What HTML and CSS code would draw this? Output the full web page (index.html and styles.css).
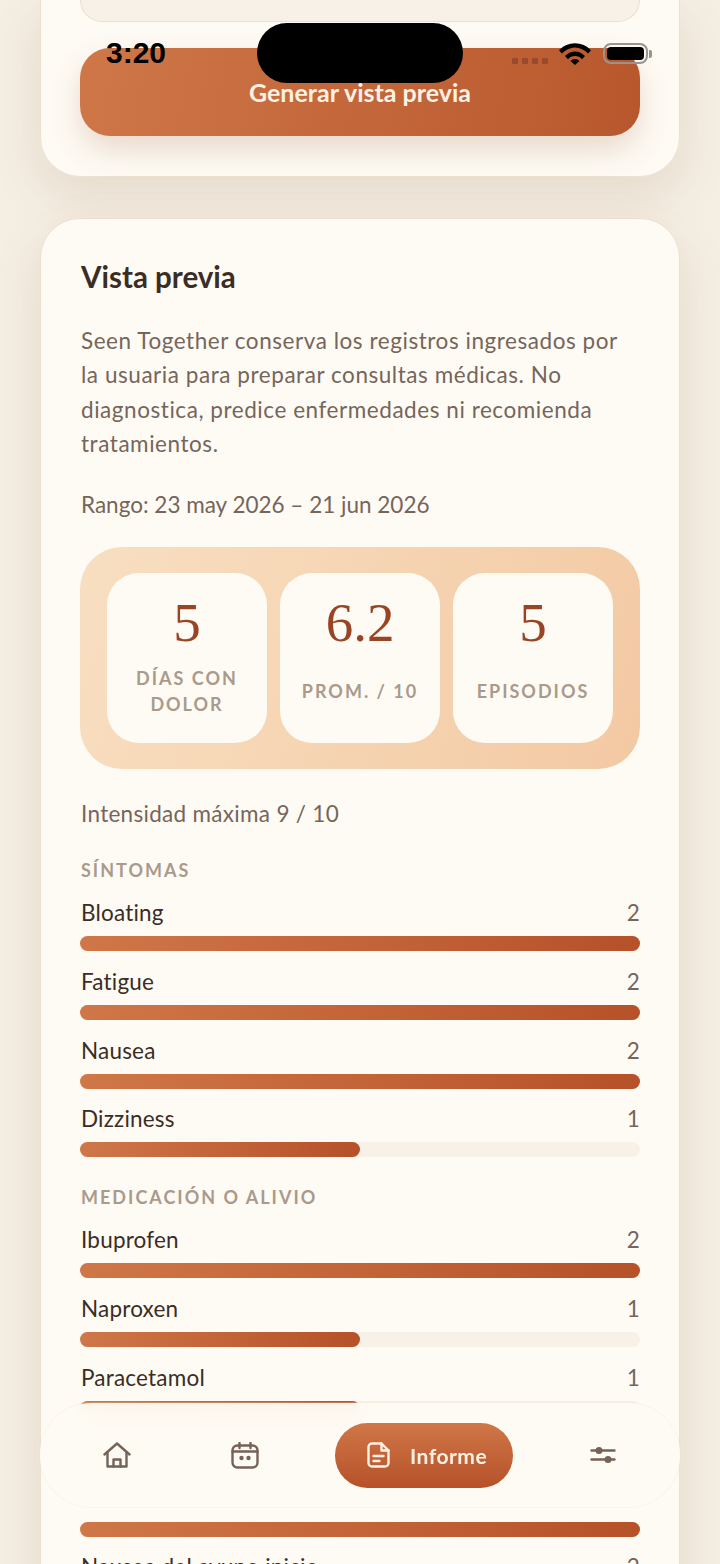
FILE: index.html
```html
<!DOCTYPE html>
<html lang="es">
<head>
  <meta charset="UTF-8">
  <title>Seen Together - Informe</title>
  <meta name="viewport" content="width=device-width, initial-scale=1">
  <link rel="stylesheet" href="styles.css">
</head>
<body>
  <div class="status-bar">
    <span class="time">3:20</span>
    <div class="island"></div>
    <div class="status-icons">
      <div class="signal"><i></i><i></i><i></i><i></i></div>
      <svg class="wifi" width="32" height="23" viewBox="0 0 32 23">
        <path d="M0 8.200a22 22 0 0 1 32 0l-3 3.200a17.600 17.600 0 0 0-26 0z"/>
        <path d="M6 14a13.500 13.500 0 0 1 20 0l-3 3.200a9.300 9.300 0 0 0-14 0z"/>
        <path d="M11.500 19a6 6 0 0 1 9 0L16 23z"/>
      </svg>
      <div class="battery"><div class="battery-fill"></div></div>
      <div class="battery-cap"></div>
    </div>
  </div>

  <main>
    <section class="card card-top">
      <div class="range-box"></div>
      <button class="primary-btn">Generar vista previa</button>
    </section>

    <section class="card card-preview">
      <h2>Vista previa</h2>
      <p class="disclaimer">Seen Together conserva los registros ingresados por la usuaria para preparar consultas médicas. No diagnostica, predice enfermedades ni recomienda tratamientos.</p>
      <p class="range">Rango: 23 may 2026 – 21 jun 2026</p>

      <div class="stats">
        <div class="stat"><div class="stat-num">5</div><div class="stat-label">Días con dolor</div></div>
        <div class="stat"><div class="stat-num">6.2</div><div class="stat-label">Prom. / 10</div></div>
        <div class="stat"><div class="stat-num">5</div><div class="stat-label">Episodios</div></div>
      </div>

      <p class="max">Intensidad máxima 9 / 10</p>

      <h3>Síntomas</h3>
      <div class="bar-list">
        <div class="bar-row"><div class="bar-head"><span>Bloating</span><b>2</b></div><div class="track"><div class="fill" style="width:100%"></div></div></div>
        <div class="bar-row"><div class="bar-head"><span>Fatigue</span><b>2</b></div><div class="track"><div class="fill" style="width:100%"></div></div></div>
        <div class="bar-row"><div class="bar-head"><span>Nausea</span><b>2</b></div><div class="track"><div class="fill" style="width:100%"></div></div></div>
        <div class="bar-row"><div class="bar-head"><span>Dizziness</span><b>1</b></div><div class="track"><div class="fill" style="width:50%"></div></div></div>
      </div>

      <h3>Medicación o alivio</h3>
      <div class="bar-list">
        <div class="bar-row"><div class="bar-head"><span>Ibuprofen</span><b>2</b></div><div class="track"><div class="fill" style="width:100%"></div></div></div>
        <div class="bar-row"><div class="bar-head"><span>Naproxen</span><b>1</b></div><div class="track"><div class="fill" style="width:50%"></div></div></div>
        <div class="bar-row"><div class="bar-head"><span>Paracetamol</span><b>1</b></div><div class="track"><div class="fill" style="width:50%"></div></div></div>
      </div>

      <h3>Contexto</h3>
      <div class="bar-list">
        <div class="bar-row"><div class="bar-head"><span></span><b></b></div><div class="track"><div class="fill" style="width:100%"></div></div></div>
        <div class="bar-row"><div class="bar-head"><span>Nausea del ayuno inicio</span><b>2</b></div><div class="track"><div class="fill" style="width:100%"></div></div></div>
      </div>
    </section>
  </main>

  <nav class="tabbar">
    <a class="tab">
      <svg width="28" height="26" viewBox="0 0 28 26" fill="none" stroke="#75635a" stroke-width="2.400" stroke-linejoin="round" stroke-linecap="round"><path d="M1.500 12.500 14 1.500l12.500 11"/><path d="M4.500 10.500v14h19v-14"/><path d="M10.500 24.500v-7h7v7"/></svg>
    </a>
    <a class="tab">
      <svg width="28" height="27" viewBox="0 0 28 27" fill="none" stroke="#75635a" stroke-width="2.400" stroke-linecap="round"><rect x="1.500" y="3.500" width="25" height="22" rx="5"/><path d="M1.500 9.500h25M8.500 1v5M19.500 1v5"/><circle cx="10.500" cy="16" r="1" fill="#75635a"/><circle cx="17.500" cy="16" r="1" fill="#75635a"/></svg>
    </a>
    <a class="tab tab-active">
      <svg width="23" height="26" viewBox="0 0 23 26" fill="none" stroke="#fdf1e4" stroke-width="2.400" stroke-linejoin="round" stroke-linecap="round"><path d="M5 1.500h9.500l7 7V21a3.500 3.500 0 0 1-3.500 3.500H5A3.500 3.500 0 0 1 1.500 21V5A3.500 3.500 0 0 1 5 1.500z"/><path d="M14.500 1.500v7h7"/><path d="M6.500 14h10M6.500 19h6"/></svg>
      <span>Informe</span>
    </a>
    <a class="tab">
      <svg width="26" height="18" viewBox="0 0 26 18" fill="none" stroke="#75635a" stroke-width="2.400" stroke-linecap="round"><path d="M1.500 4.500h23M1.500 13.500h23"/><circle cx="9" cy="4.500" r="3.500" fill="#75635a" stroke="none"/><circle cx="18" cy="13.500" r="3.500" fill="#75635a" stroke="none"/></svg>
    </a>
  </nav>
</body>
</html>
```

FILE: styles.css
```css
* {
  box-sizing: border-box;
}
html, body {
  height: 1564px;
  overflow: hidden;
}
body {
  margin: 0;
  position: relative;
  font-family: "Lato", "Noto Sans", sans-serif;
  color: #3a2d26;
  background: #f5eee3;
}
main {
  padding: 0 40px;
  display: flex;
  flex-direction: column;
  gap: 41px;
}
.card {
  background: #fefbf4;
  border: 1px solid #eee1d0;
  box-shadow: 0 18px 50px rgba(120, 85, 50, 0.13);
  padding: 0 39px;
}
.card-top {
  height: 177px;
  border-top: none;
  border-radius: 0 0 40px 40px;
}
.range-box {
  height: 22px;
  background: #f8f1e7;
  border: 1px solid #ecdfcd;
  border-top: none;
  border-radius: 0 0 28px 28px;
  margin-bottom: 26px;
}
.primary-btn {
  display: block;
  width: 100%;
  height: 88px;
  padding: 0;
  border: none;
  border-radius: 30px;
  background: linear-gradient(100deg, #cf7748, #b8572d);
  box-shadow: 0 14px 30px rgba(150, 85, 50, 0.2);
  color: #fdf1e4;
  font: 700 25px "Lato", sans-serif;
}
.card-preview {
  border-radius: 40px 40px 0 0;
  padding-top: 39px;
  height: 1400px;
}
h2, .disclaimer, .range, .max, h3, .bar-head {
  padding-left: 1px;
}
h2 {
  margin: 0 0 28px;
  font-size: 29.500px;
  line-height: 38px;
  font-weight: 700;
}
.disclaimer {
  margin: 0 0 27px;
  font-size: 22.500px;
  line-height: 34.300px;
  letter-spacing: 0.550px;
  color: #75655b;
}
.range, .max {
  margin: 0;
  font-size: 22.500px;
  line-height: 34px;
  color: #75655b;
}
.max {
  letter-spacing: 0.300px;
}
.stats {
  display: grid;
  grid-template-columns: repeat(3, 1fr);
  gap: 13px;
  margin: 25px 0 28px;
  padding: 26px 27px;
  height: 222px;
  border-radius: 42px;
  background: linear-gradient(110deg, #f8dfc1, #f3c9a3);
}
.stat {
  display: flex;
  flex-direction: column;
  align-items: center;
  padding: 20px 10px 0;
  border-radius: 32px;
  background: #fefbf4;
  text-align: center;
}
.stat-num {
  font: 400 55px/60px "Liberation Serif", serif;
  color: #9a4426;
}
.stat-label {
  flex: 1;
  display: flex;
  align-items: center;
  padding-bottom: 14px;
  font-size: 18px;
  line-height: 26px;
  font-weight: 700;
  letter-spacing: 2px;
  text-transform: uppercase;
  color: #a99a8c;
}
h3 {
  margin: 26px 0 16px;
  font-size: 18px;
  line-height: 26px;
  font-weight: 700;
  letter-spacing: 2px;
  text-transform: uppercase;
  color: #a99a8c;
}
.bar-list {
  display: flex;
  flex-direction: column;
  gap: 16.700px;
  margin-bottom: 27px;
}
.bar-head {
  display: flex;
  justify-content: space-between;
  height: 37px;
  font-size: 22.500px;
  line-height: 28px;
  letter-spacing: 0.200px;
}
.bar-head b {
  font-weight: 400;
  color: #75655b;
}
.track {
  height: 15px;
  border-radius: 8px;
  background: #f8f1e7;
}
.fill {
  height: 100%;
  border-radius: 8px;
  background: linear-gradient(90deg, #cf7748, #b65129);
}

/* floating bits */
.status-bar {
  position: absolute;
  top: 0;
  left: 0;
  right: 0;
  height: 84px;
  z-index: 5;
  display: flex;
  justify-content: space-between;
  align-items: flex-start;
  padding: 0 68px 0 106px;
}
.time {
  margin-top: 36px;
  font: 700 30px/34px "Liberation Sans", sans-serif;
  color: #000;
}
.island {
  position: absolute;
  left: 257px;
  top: 23px;
  width: 206px;
  height: 60px;
  border-radius: 30px;
  background: #000;
}
.status-icons {
  display: flex;
  align-items: center;
  margin-top: 42px;
}
.signal {
  display: flex;
  gap: 4px;
  margin: 15px 11px 0 0;
}
.signal i {
  width: 6px;
  height: 6px;
  border-radius: 1px;
  background: rgba(120, 60, 40, 0.55);
}
.wifi {
  fill: #000;
  margin-right: 12px;
}
.battery {
  width: 45px;
  height: 21px;
  padding: 2px;
  border: 2px solid #9a9490;
  border-radius: 8px;
}
.battery-fill {
  height: 100%;
  border-radius: 4px;
  background: #000;
}
.battery-cap {
  width: 3px;
  height: 8px;
  margin-left: 1px;
  border-radius: 0 2px 2px 0;
  background: #9a9490;
}
.tabbar {
  position: absolute;
  left: 40px;
  top: 1403px;
  width: 640px;
  height: 104px;
  z-index: 4;
  display: flex;
  align-items: center;
  padding: 0 13px;
  border-radius: 52px;
  background: rgba(254, 251, 244, 0.96);
  backdrop-filter: blur(10px);
  box-shadow: 0 0 0 1px rgba(238, 225, 208, 0.25);
}
.tab {
  display: flex;
  align-items: center;
  justify-content: center;
  width: 128px;
}
.tab-active {
  justify-content: flex-start;
  gap: 20px;
  flex: none;
  width: 178px;
  height: 65px;
  margin: 0 26px;
  padding-left: 32px;
  border-radius: 33px;
  background: linear-gradient(180deg, #cf7748, #b65129);
  color: #fdf1e4;
  font-size: 21px;
  font-weight: 700;
  letter-spacing: 0.500px;
}
```
